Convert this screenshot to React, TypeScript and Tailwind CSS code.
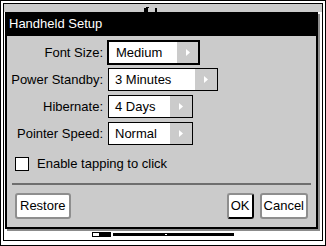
function Arrow() {
  return (
    <svg width="4" height="7" viewBox="0 0 4 7" className="block">
      <path d="M0 0 L4 3.5 L0 7 Z" fill="#ffffff" />
    </svg>
  )
}

export default function App() {
  return (
    <div className="w-[326px] h-[246px] bg-white border border-black pt-[2px] px-[2px] pb-[4px] font-['Liberation_Sans',Arial,sans-serif] text-[13px] text-black">
      <div className="h-full border border-black flex flex-col">
        {/* document tab strip, mostly hidden by the dialog */}
        <div className="h-[8px] bg-[#cbcbcb] relative">
          <svg width="24" height="5" viewBox="0 0 24 5" className="absolute left-[138px] top-[3px]">
            <path d="M2 1 h4 v4 h-4 Z M4 0 h3 v1 h-3 Z" fill="#000" />
            <rect x="13" y="1" width="2" height="4" fill="#000" />
          </svg>
        </div>

        {/* dialog */}
        <div className="ml-[1px] w-[313px] h-[217px] border-2 border-black bg-[#cbcbcb] shadow-[2px_2px_0_#8c8c8c] flex flex-col">
          <div className="h-[22px] bg-black text-white pl-[2px] leading-[20px] text-[13px]">Handheld Setup</div>

          <div className="flex-1 flex flex-col pt-[5px] px-[8px] pb-[8px]">
            <div className="-ml-[5px] flex flex-col gap-[4px] whitespace-nowrap">
              <div className="flex items-center h-[23px]">
                <div className="w-[93px] text-right">Font Size:</div>
                <div className="ml-[4px] -my-px flex w-[93px] h-[25px] border-2 border-black bg-white">
                  <div className="flex-1 pl-[7px] leading-[21px]">Medium</div>
                  <div className="w-[21px] bg-[#cbcbcb] flex items-center justify-center"><Arrow /></div>
                </div>
              </div>
              <div className="flex items-center h-[23px]">
                <div className="w-[93px] text-right">Power Standby:</div>
                <div className="ml-[5px] flex w-[110px] h-[23px] border border-black bg-white">
                  <div className="flex-1 pl-[6px] leading-[21px]">3 Minutes</div>
                  <div className="w-[22px] bg-[#cbcbcb] flex items-center justify-center"><Arrow /></div>
                </div>
              </div>
              <div className="flex items-center h-[23px]">
                <div className="w-[93px] text-right">Hibernate:</div>
                <div className="ml-[5px] flex w-[85px] h-[23px] border border-black bg-white">
                  <div className="flex-1 pl-[6px] leading-[21px]">4 Days</div>
                  <div className="w-[22px] bg-[#cbcbcb] flex items-center justify-center"><Arrow /></div>
                </div>
              </div>
              <div className="flex items-center h-[23px]">
                <div className="w-[93px] text-right">Pointer Speed:</div>
                <div className="ml-[5px] flex w-[85px] h-[23px] border border-black bg-white">
                  <div className="flex-1 pl-[6px] leading-[21px]">Normal</div>
                  <div className="w-[22px] bg-[#cbcbcb] flex items-center justify-center"><Arrow /></div>
                </div>
              </div>
            </div>

            <div className="mt-[12px] flex items-center h-[13px]">
              <div className="w-[14px] h-[14px] border border-black bg-white"></div>
              <span className="ml-[8px] leading-[14px]">Enable tapping to click</span>
            </div>

            <div className="mt-[13px] mx-[-3px] h-[2px] bg-[#6e6e6e]"></div>

            <div className="mt-[8px] flex items-center h-[26px]">
              <div className="h-[26px] px-[3px] border-2 border-[#8e8e8e] rounded-[3px] bg-white leading-[22px]">Restore</div>
              <div className="ml-auto h-[26px] px-[2px] border-2 border-[#8e8e8e] border-r-black border-b-black rounded-[3px] bg-white leading-[22px]">OK</div>
              <div className="ml-[6px] h-[26px] px-[2px] border-2 border-[#8e8e8e] rounded-[3px] bg-white leading-[22px]">Cancel</div>
            </div>
          </div>
        </div>

        {/* status bar */}
        <div className="mt-[3px] flex items-center">
          <div className="ml-[88px] w-[19px] h-[5px] border border-black bg-white flex">
            <div className="ml-[6px] w-[11px] bg-black"></div>
          </div>
          <div className="ml-[2px] w-[121px] h-[3px] bg-black relative">
            <div className="absolute left-[52px] top-[1px] w-[2px] h-[1px] bg-white"></div>
          </div>
        </div>
      </div>
    </div>
  )
}
